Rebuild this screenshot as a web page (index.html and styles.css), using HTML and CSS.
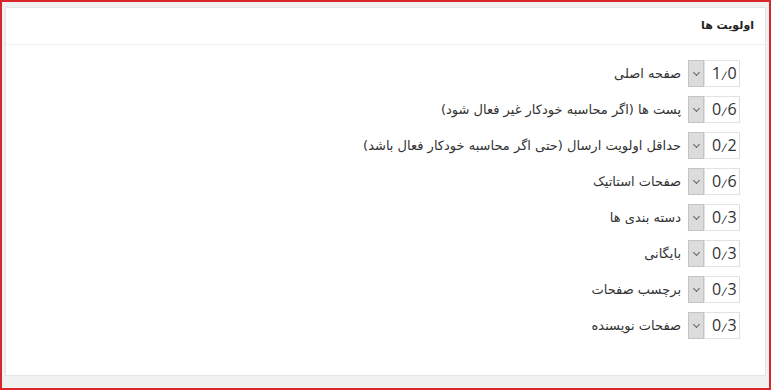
FILE: index.html
```html
<!DOCTYPE html>
<html lang="fa" dir="rtl">
<head>
    <meta charset="UTF-8">
    <title>اولویت ها</title>
    <link rel="stylesheet" href="styles.css">
</head>
<body>
    <div class="frame">
        <div class="postbox">
            <h2 class="postbox-title">اولویت ها</h2>
            <div class="postbox-inside">
                <div class="priority-row">
                    <div class="fake-select"><span class="value">1<span class="sep">/</span>0</span><span class="arrow"></span></div>
                    <label>صفحه اصلی</label>
                </div>
                <div class="priority-row">
                    <div class="fake-select"><span class="value">0<span class="sep">/</span>6</span><span class="arrow"></span></div>
                    <label>پست ها (اگر محاسبه خودکار غیر فعال شود)</label>
                </div>
                <div class="priority-row">
                    <div class="fake-select"><span class="value">0<span class="sep">/</span>2</span><span class="arrow"></span></div>
                    <label>حداقل اولویت ارسال (حتی اگر محاسبه خودکار فعال باشد)</label>
                </div>
                <div class="priority-row">
                    <div class="fake-select"><span class="value">0<span class="sep">/</span>6</span><span class="arrow"></span></div>
                    <label>صفحات استاتیک</label>
                </div>
                <div class="priority-row">
                    <div class="fake-select"><span class="value">0<span class="sep">/</span>3</span><span class="arrow"></span></div>
                    <label>دسته بندی ها</label>
                </div>
                <div class="priority-row">
                    <div class="fake-select"><span class="value">0<span class="sep">/</span>3</span><span class="arrow"></span></div>
                    <label>بایگانی</label>
                </div>
                <div class="priority-row">
                    <div class="fake-select"><span class="value">0<span class="sep">/</span>3</span><span class="arrow"></span></div>
                    <label>برچسب صفحات</label>
                </div>
                <div class="priority-row">
                    <div class="fake-select"><span class="value">0<span class="sep">/</span>3</span><span class="arrow"></span></div>
                    <label>صفحات نویسنده</label>
                </div>
            </div>
        </div>
    </div>
</body>
</html>
```

FILE: styles.css
```css
html, body {
    margin: 0;
    padding: 0;
}
body {
    font-family: "DejaVu Sans", sans-serif;
    color: #333;
}
.frame {
    box-sizing: border-box;
    width: 771px;
    height: 390px;
    border: 2px solid #d9262b;
    background-color: #f1f1f1;
    padding: 5px 3px 0 3px;
}
.postbox {
    background-color: #fff;
    border: 1px solid #e5e5e5;
    height: 367px;
}
.postbox-title {
    margin: 0;
    height: 36px;
    line-height: 36px;
    padding: 0 11px;
    font-size: 11px;
    font-weight: bold;
    color: #222;
    border-bottom: 1px solid #eee;
}
.postbox-inside {
    padding: 15px 25px 0 0;
    display: flex;
    flex-direction: column;
    gap: 9px;
}
.priority-row {
    display: flex;
    align-items: center;
    gap: 7px;
    height: 27px;
}
.priority-row label {
    font-size: 13px;
    color: #333;
}
.fake-select {
    display: flex;
    height: 27px;
}
.fake-select .value {
    box-sizing: border-box;
    width: 36px;
    height: 27px;
    border: 1px solid #e2e2e2;
    border-right-color: #ddd;
    direction: ltr;
    text-align: left;
    padding-left: 7px;
    font-family: "Open Sans", "Noto Sans", sans-serif;
    font-size: 16px;
    line-height: 25px;
    color: #333;
}
.fake-select .sep {
    display: inline-block;
    font-size: 12px;
    margin: 0 1px;
    transform: skewX(-10deg);
    vertical-align: -1px;
}
.fake-select .arrow {
    box-sizing: border-box;
    width: 16px;
    height: 27px;
    background-color: #dcdcdc;
    border: 1px solid #c4c4c4;
    position: relative;
}
.fake-select .arrow::after {
    content: "";
    position: absolute;
    left: 5px;
    top: 9px;
    width: 4px;
    height: 4px;
    border-right: 1px solid #666;
    border-bottom: 1px solid #666;
    transform: rotate(45deg);
}
```
